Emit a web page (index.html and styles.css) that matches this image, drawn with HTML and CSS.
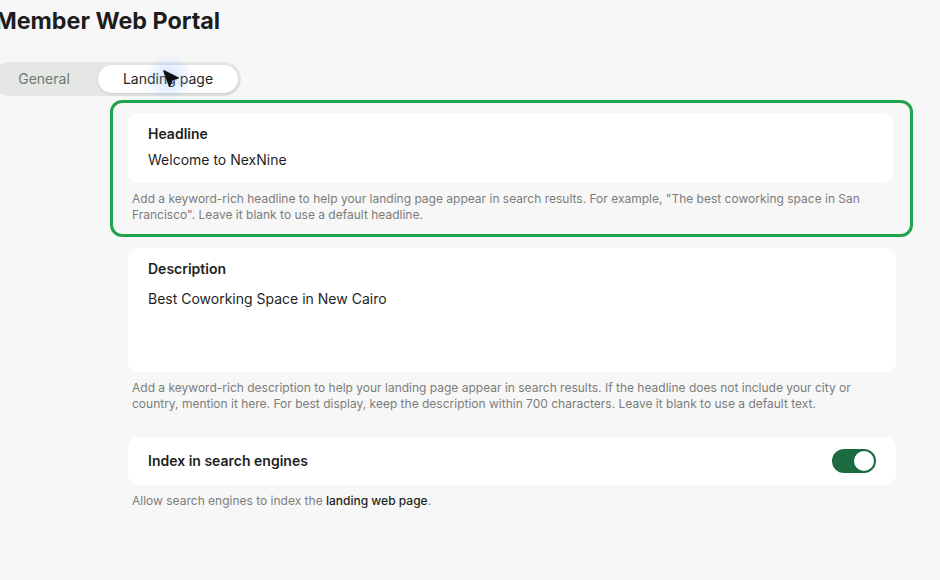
FILE: index.html
```html
<!DOCTYPE html>
<html lang="en">
<head>
<meta charset="utf-8">
<title>Member Web Portal</title>
<link rel="stylesheet" href="styles.css">
</head>
<body>
<main class="page">
  <h1 class="title">Member Web Portal</h1>

  <div class="segmented">
    <button class="seg-tab">General</button>
    <button class="seg-tab seg-tab--active">Landing page</button>
  </div>

  <section class="form">
    <div class="highlight">
      <div class="field">
        <div class="field-label">Headline</div>
        <div class="field-value">Welcome to NexNine</div>
      </div>
      <p class="help">Add a keyword-rich headline to help your landing page appear in search results. For example, "The best coworking space in San Francisco". Leave it blank to use a default headline.</p>
    </div>

    <div class="group">
      <div class="field field--area">
        <div class="field-label">Description</div>
        <div class="field-value field-value--area">Best Coworking Space in New Cairo</div>
      </div>
      <p class="help">Add a keyword-rich description to help your landing page appear in search results. If the headline does not include your city or country, mention it here. For best display, keep the description within 700 characters. Leave it blank to use a default text.</p>
    </div>

    <div class="group group--toggle">
      <div class="field field--row">
        <div class="field-label">Index in search engines</div>
        <span class="switch" role="switch" aria-checked="true"><span class="switch-knob"></span></span>
      </div>
      <p class="help">Allow search engines to index the <a class="help-link">landing web page</a>.</p>
    </div>
  </section>

  <div class="pointer">
    <span class="pointer-glow"></span>
    <svg class="pointer-arrow" width="18" height="20" viewBox="0 0 18 20">
      <path d="M2 2 L16 9 L10 10.8 L7.6 17 Z" fill="#111" stroke="#111" stroke-width="1.6" stroke-linejoin="round"/>
    </svg>
  </div>
</main>
</body>
</html>
```

FILE: styles.css
```css
* { box-sizing: border-box; }

html, body {
  margin: 0;
  background: #f7f7f7;
}

body {
  font-family: Inter, "Noto Sans", "Liberation Sans", sans-serif;
  color: #1e1f1e;
  width: 940px;
  height: 580px;
  overflow: hidden;
}

.page {
  position: relative;
  padding-top: 8px;
  margin-left: -4px;
}

.title {
  margin: 0 0 0 -1px;
  font-size: 23.3px;
  line-height: 26px;
  font-weight: 700;
  color: #1c1d1c;
}

/* tab switcher */
.segmented {
  display: inline-flex;
  gap: 6px;
  margin: 28px 0 0 -3px;
  padding: 3px;
  background: #e4e7e4;
  border-radius: 17px;
}

.seg-tab {
  border: 0;
  background: transparent;
  font-family: inherit;
  font-size: 14px;
  line-height: 20px;
  height: 28px;
  width: 96px;
  padding: 0;
  border-radius: 14px;
  color: #6d7b73;
  cursor: pointer;
}

.seg-tab--active {
  width: 140px;
  background: #fff;
  color: #1e1f1e;
  box-shadow: 0 1px 3px rgba(0, 0, 0, 0.14);
}

/* form column */
.form {
  width: 768px;
  margin: 4px 0 0 132px;
  display: flex;
  flex-direction: column;
}

.highlight {
  margin: 0 -17px 0 -18px;
  padding: 10px 17px 11px 15px;
  border: 3px solid #1ea44b;
  border-radius: 12px;
}

.group { margin-top: 11px; }
.group--toggle { margin-top: 25px; }

.field {
  background: #fff;
  border-radius: 10px;
  padding: 11px 20px 13px;
}

.field-label {
  font-size: 14px;
  line-height: 20px;
  font-weight: 600;
  color: #1e1f1e;
}

.field-value {
  margin-top: 6px;
  font-size: 14px;
  line-height: 20px;
  color: #1e1f1e;
}

.field--area { height: 124px; }
.field-value--area { margin-top: 10px; }

.field--row {
  display: flex;
  align-items: center;
  justify-content: space-between;
  height: 48px;
  padding: 0 20px;
}

.help {
  margin: 8px 0 0;
  padding: 0 4px;
  font-size: 12px;
  line-height: 16px;
  color: #7b7d7b;
}

.help-link {
  color: #1e1f1e;
  font-weight: 500;
}

/* on/off switch */
.switch {
  width: 44px;
  height: 24px;
  border-radius: 12px;
  background: #1c6a3f;
  display: flex;
  align-items: center;
  justify-content: flex-end;
  padding: 2px;
}

.switch-knob {
  width: 20px;
  height: 20px;
  border-radius: 50%;
  background: #fff;
}

/* mouse pointer over the tabs */
.pointer {
  position: absolute;
  left: 166px;
  top: 69px;
  width: 18px;
  height: 20px;
}

.pointer-glow {
  position: absolute;
  left: -16px;
  top: -16px;
  width: 46px;
  height: 50px;
  border-radius: 50%;
  background: radial-gradient(circle, rgba(120, 170, 255, 0.35) 0%, rgba(150, 190, 255, 0.14) 50%, rgba(150, 190, 255, 0) 72%);
}

.pointer-arrow {
  position: absolute;
  left: 0;
  top: 0;
}
```
